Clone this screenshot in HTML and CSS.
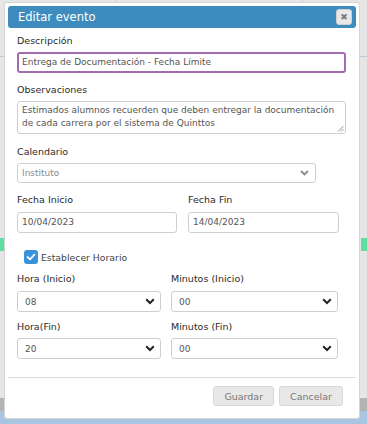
FILE: index.html
```html
<!DOCTYPE html>
<html lang="es">
<head>
<meta charset="utf-8">
<title>Editar evento</title>
<link rel="stylesheet" href="styles.css">
</head>
<body>
<div class="backdrop">
  <div class="bg-line bg-v1"></div>
  <div class="bg-line bg-v2"></div>
  <div class="bg-h bg-h-left"></div>
  <div class="bg-h bg-h-right"></div>
  <div class="bg-green bg-green-left"></div>
  <div class="bg-green bg-green-right"></div>
  <div class="bg-gray"></div>
  <div class="bg-blue"></div>
</div>
<div class="modal">
  <div class="modal-header">
    <span class="modal-title">Editar evento</span>
    <span class="close-btn">✖</span>
  </div>
  <div class="modal-body">
    <div class="field f-desc">
      <label class="lbl">Descripción</label>
      <div class="input input-focus">Entrega de Documentación - Fecha Límite</div>
    </div>
    <div class="field f-obs">
      <label class="lbl">Observaciones</label>
      <div class="input textarea">Estimados alumnos recuerden que deben entregar la documentación de cada carrera por el sistema de Quinttos
        <svg class="grip" width="7" height="7" viewBox="0 0 7 7"><path d="M6.5 1 L1 6.5 M6.5 4 L4 6.5" stroke="#777" stroke-width="0.8"/></svg>
      </div>
    </div>
    <div class="field f-cal">
      <label class="lbl">Calendario</label>
      <div class="select select-cal disabled">
        <span>Instituto</span>
        <svg class="chev" width="9" height="6" viewBox="0 0 9 6"><path d="M1 1 L4.5 4.5 L8 1" fill="none" stroke="#8a8a8a" stroke-width="1.8"/></svg>
      </div>
    </div>
    <div class="row row-dates">
      <div class="field col-a">
        <label class="lbl">Fecha Inicio</label>
        <div class="input">10/04/2023</div>
      </div>
      <div class="field col-b">
        <label class="lbl">Fecha Fin</label>
        <div class="input">14/04/2023</div>
      </div>
    </div>
    <div class="check-row">
      <span class="checkbox">
        <svg width="10" height="8" viewBox="0 0 10 8"><path d="M1.5 4 L4 6.3 L8.5 1.5" fill="none" stroke="#fff" stroke-width="1.7" stroke-linecap="round" stroke-linejoin="round"/></svg>
      </span>
      <span class="check-label">Establecer Horario</span>
    </div>
    <div class="row row-time">
      <div class="field col-h">
        <label class="lbl">Hora (Inicio)</label>
        <div class="select"><span>08</span>
          <svg class="chev" width="10" height="7" viewBox="0 0 10 7"><path d="M1.2 1.3 L5 5 L8.8 1.3" fill="none" stroke="#222" stroke-width="2"/></svg>
        </div>
      </div>
      <div class="field col-m">
        <label class="lbl">Minutos (Inicio)</label>
        <div class="select"><span>00</span>
          <svg class="chev" width="10" height="7" viewBox="0 0 10 7"><path d="M1.2 1.3 L5 5 L8.8 1.3" fill="none" stroke="#222" stroke-width="2"/></svg>
        </div>
      </div>
    </div>
    <div class="row row-time2">
      <div class="field col-h">
        <label class="lbl">Hora(Fin)</label>
        <div class="select"><span>20</span>
          <svg class="chev" width="10" height="7" viewBox="0 0 10 7"><path d="M1.2 1.3 L5 5 L8.8 1.3" fill="none" stroke="#222" stroke-width="2"/></svg>
        </div>
      </div>
      <div class="field col-m">
        <label class="lbl">Minutos (Fin)</label>
        <div class="select"><span>00</span>
          <svg class="chev" width="10" height="7" viewBox="0 0 10 7"><path d="M1.2 1.3 L5 5 L8.8 1.3" fill="none" stroke="#222" stroke-width="2"/></svg>
        </div>
      </div>
    </div>
  </div>
  <div class="modal-footer">
    <button class="btn">Guardar</button>
    <button class="btn">Cancelar</button>
  </div>
</div>
</body>
</html>
```
FILE: styles.css
```css
html, body {
  margin: 0;
  padding: 0;
}
body {
  width: 367px;
  height: 424px;
  overflow: hidden;
  background: #e6e6e6;
  position: relative;
  font-family: "DejaVu Sans", "Open Sans", sans-serif;
  color: #333;
}
.backdrop {
  position: absolute;
  inset: 0;
}
.bg-line {
  position: absolute;
  top: 0;
  width: 1px;
  height: 4px;
  background: #b9cde0;
}
.bg-v1 { left: 115px; }
.bg-v2 { left: 302px; }
.bg-h {
  position: absolute;
  top: 56px;
  height: 1px;
  background: #b9cde0;
}
.bg-h-left { left: 0; width: 4px; }
.bg-h-right { right: 0; width: 7px; }
.bg-green {
  position: absolute;
  top: 238px;
  height: 13px;
  background: #5fe0a2;
}
.bg-green-left { left: 0; width: 4px; }
.bg-green-right { right: 0; width: 6px; }
.bg-gray {
  position: absolute;
  left: 0;
  right: 0;
  top: 398px;
  height: 13px;
  background: #b3b3b3;
}
.bg-blue {
  position: absolute;
  left: 0;
  right: 0;
  top: 411px;
  height: 13px;
  background: #a9c5e2;
}
.modal {
  position: absolute;
  left: 4px;
  top: 2px;
  width: 348px;
  height: 409px;
  background: #fff;
  border: 1px solid #d6d6d6;
  border-radius: 3px;
  padding: 3px;
}
.modal-header {
  height: 22px;
  background: #3d8cbd;
  border-radius: 3px;
  display: flex;
  align-items: center;
  justify-content: space-between;
  padding: 0 4px 0 10px;
}
.modal-title {
  color: #fff;
  font-size: 11.5px;
}
.close-btn {
  width: 14px;
  height: 14px;
  background: #e8e8e8;
  border: 1px solid #d0d0d0;
  border-radius: 3px;
  color: #7a7a7a;
  font-size: 9px;
  line-height: 14px;
  text-align: center;
}
.modal-body {
  padding: 7px 10px 0 9px;
  height: 342px;
}
.field {
  display: flex;
  flex-direction: column;
}
.lbl {
  font-size: 9.5px;
  line-height: 12px;
  color: #2a2a2a;
  margin-bottom: 5px;
}
.f-desc { margin-bottom: 11px; }
.f-obs { margin-bottom: 12px; }
.f-cal { margin-bottom: 11px; }
.input {
  border: 1px solid #cfcfcf;
  border-radius: 3px;
  box-sizing: border-box;
  height: 21px;
  padding: 0 4px;
  font-size: 9px;
  line-height: 19px;
  color: #555;
  white-space: nowrap;
  overflow: hidden;
}
.input-focus {
  border: 2px solid #a46cb0;
  padding: 0 3px;
  line-height: 17px;
}
.textarea {
  height: 33px;
  white-space: normal;
  line-height: 13px;
  padding: 2px 4px;
  position: relative;
}
.grip {
  position: absolute;
  right: 1px;
  bottom: 1px;
}
.select {
  display: flex;
  align-items: center;
  justify-content: space-between;
  border: 1px solid #cfcfcf;
  border-radius: 3px;
  height: 21px;
  box-sizing: border-box;
  padding: 0 5px 0 7px;
  font-size: 9px;
  color: #555;
}
.select-cal {
  width: 299px;
  height: 20px;
  padding-left: 4px;
  padding-right: 6px;
}
.disabled { color: #8a8a8a; }
.row {
  display: flex;
}
.row-dates { gap: 11px; }
.row-dates .lbl { margin-bottom: 6px; }
.col-a { width: 160px; }
.col-b { width: 151px; }
.col-h { width: 144px; }
.col-m { width: 167px; }
.row-time, .row-time2 { gap: 10px; }
.row-time .lbl { margin-bottom: 6px; }
.row-time { margin-bottom: 9px; }
.check-row {
  display: flex;
  align-items: center;
  gap: 3px;
  margin: 17px 0 9px 7px;
  height: 14px;
}
.checkbox {
  width: 14px;
  height: 14px;
  border-radius: 3px;
  background: #3a93d8;
  display: flex;
  align-items: center;
  justify-content: center;
}
.check-label {
  font-size: 9.3px;
  color: #444;
}
.modal-footer {
  border-top: 1px solid #dcdcdc;
  display: flex;
  justify-content: flex-end;
  gap: 5px;
  padding: 8px 13px 0 0;
}
.btn {
  font-family: inherit;
  font-size: 9.5px;
  color: #777;
  background: #e8e8e8;
  border: 1px solid #d8d8d8;
  border-radius: 3px;
  height: 20px;
  padding: 0 10px;
}
```
